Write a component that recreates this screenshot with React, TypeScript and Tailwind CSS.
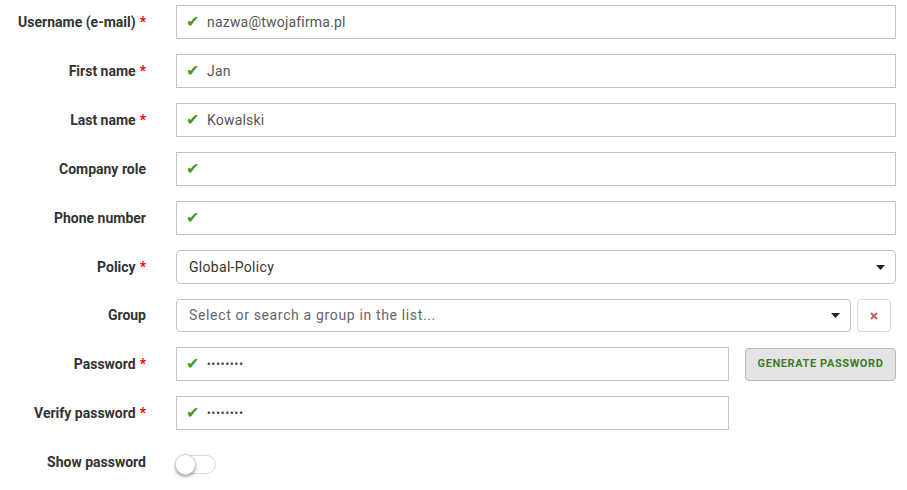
import React, { useState } from 'react';

type Field = {
  label: string;
  required?: boolean;
  value: string;
  kind?: 'text' | 'password';
};

const Check = () => (
  <span className="text-[#3f9a2b] text-[16px] leading-none mr-[8px] w-[13px] -ml-[1px]">✔</span>
);

const Label = ({ text, required }: { text: string; required?: boolean }) => (
  <div className="w-[146px] shrink-0 text-right font-bold text-[14px] text-[#333]">
    {text}
    {required && <span className="text-[#ff0000] ml-[4px]">*</span>}
  </div>
);

const Caret = () => (
  <svg width="9" height="5" viewBox="0 0 9 5" className="shrink-0">
    <path d="M0 0h9L4.5 5z" fill="#222" />
  </svg>
);

const TextInput = ({ value, kind, className = '' }: { value: string; kind?: string; className?: string }) => (
  <div className={`h-[34px] border border-[#c4c4c4] bg-white flex items-center pl-[10px] ${className}`}>
    <Check />
    <span className={kind === 'password' ? 'text-[#444] text-[10px] tracking-[1px] font-bold' : 'text-[#555] text-[14px] tracking-[0.2px]'}>
      {value}
    </span>
  </div>
);

const fields: Field[] = [
  { label: 'Username (e-mail)', required: true, value: 'nazwa@twojafirma.pl' },
  { label: 'First name', required: true, value: 'Jan' },
  { label: 'Last name', required: true, value: 'Kowalski' },
  { label: 'Company role', value: '' },
  { label: 'Phone number', value: '' },
];

export default function App() {
  const [show, setShow] = useState(false);

  return (
    <div className="w-[907px] h-[490px] bg-white pt-[5px] pr-[11px]" style={{ fontFamily: 'Roboto, "Liberation Sans", sans-serif' }}>
      <div className="flex flex-col gap-[15px]">
        {fields.map((f) => (
          <div key={f.label} className="flex items-center">
            <Label text={f.label} required={f.required} />
            <TextInput value={f.value} className="ml-[30px] flex-1" />
          </div>
        ))}

        <div className="flex items-center">
          <Label text="Policy" required />
          <div className="ml-[30px] flex-1 h-[34px] border border-[#c4c4c4] rounded-[4px] flex items-center justify-between pl-[12px] pr-[10px]">
            <span className="text-[#333] text-[14px] tracking-[0.3px]">Global-Policy</span>
            <Caret />
          </div>
        </div>

        <div className="flex items-center">
          <Label text="Group" />
          <div className="ml-[30px] flex-1 h-[33px] border border-[#c4c4c4] rounded-[4px] flex items-center justify-between pl-[12px] pr-[10px]">
            <span className="text-[#666] text-[14px] tracking-[0.65px]">Select or search a group in the list...</span>
            <Caret />
          </div>
          <button className="ml-[6px] w-[34px] h-[33px] border border-[#dcdcdc] rounded-[4px] flex items-center justify-center mr-[5px]">
            <svg width="8" height="8" viewBox="0 0 8 8">
              <path d="M1 1l6 6M7 1L1 7" stroke="#c06060" strokeWidth="2" />
            </svg>
          </button>
        </div>

        <div className="flex items-center">
          <Label text="Password" required />
          <TextInput value="••••••••" kind="password" className="ml-[30px] w-[553px]" />
          <button className="ml-auto w-[151px] h-[33px] bg-[#e4e4e4] border border-[#b8b8b8] rounded-[4px] text-[#3f7a28] font-bold text-[11px] tracking-[0.6px]">
            GENERATE PASSWORD
          </button>
        </div>

        <div className="flex items-center">
          <Label text="Verify password" required />
          <TextInput value="••••••••" kind="password" className="ml-[30px] w-[553px]" />
        </div>

        <div className="flex items-center mt-[5px]">
          <Label text="Show password" />
          <button
            onClick={() => setShow(!show)}
            className="ml-[29px] relative w-[41px] h-[19px] rounded-full border border-[#d8d8d8] bg-white mt-[5px]"
          >
            <span
              className={`absolute top-[-2px] ${show ? 'left-[19px]' : 'left-[-1px]'} w-[21px] h-[21px] rounded-full bg-white border border-[#d0d0d0] shadow-[0_2px_3px_rgba(0,0,0,0.35)]`}
            />
          </button>
        </div>
      </div>
    </div>
  );
}
